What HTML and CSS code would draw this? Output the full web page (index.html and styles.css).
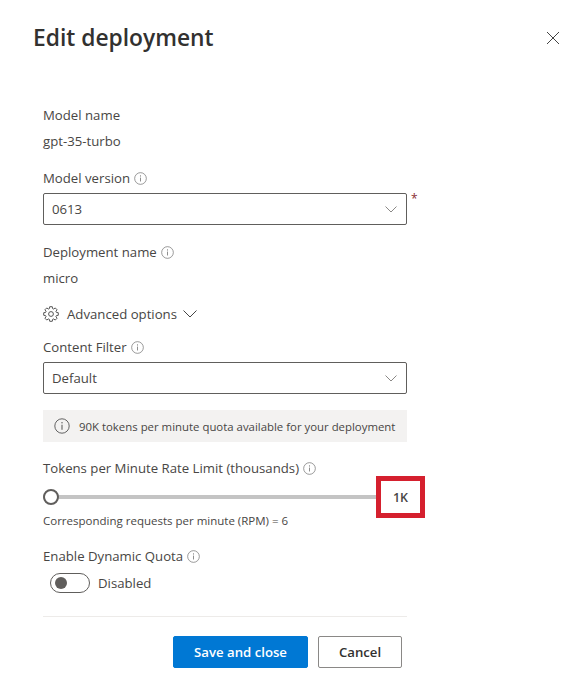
FILE: index.html
```html
<!DOCTYPE html>
<html lang="en">
<head>
<meta charset="utf-8">
<title>Edit deployment</title>
<link rel="stylesheet" href="styles.css">
</head>
<body>
<main class="panel">
  <header class="panel-head">
    <h1 class="panel-title">Edit deployment</h1>
    <button class="close" aria-label="Close">
      <svg width="14" height="14" viewBox="0 0 14 14"><path d="M1 1l12 12M13 1L1 13" fill="none" stroke="#444" stroke-width="1"/></svg>
    </button>
  </header>
  <form class="form">
    <div class="line l-name">Model name</div>
    <div class="line l-value">gpt-35-turbo</div>
    <div class="line l-version">Model version
      <svg class="info" viewBox="0 0 14 14"><use href="#i"/></svg>
    </div>
    <div class="select-row">
      <div class="select"><span>0613</span><svg class="chev" viewBox="0 0 12 7"><path d="M.5.5L6 6 11.500.5" fill="none" stroke="#8a8886"/></svg></div>
      <span class="req">*</span>
    </div>
    <div class="line l-dep">Deployment name
      <svg class="info" viewBox="0 0 14 14"><use href="#i"/></svg>
    </div>
    <div class="line l-value">micro</div>
    <div class="line l-adv">
      <svg class="gear" viewBox="0 0 16 16"><circle cx="8" cy="8" r="2.400" fill="none" stroke="#444" stroke-width=".9"/><path d="M6.710.71L9.290.71 9.640 2.640 10.630 3.060 12.240 1.940 14.060 3.760 12.940 5.370 13.360 6.360 15.290 6.710 15.290 9.290 13.360 9.640 12.940 10.630 14.060 12.240 12.240 14.060 10.630 12.940 9.640 13.360 9.290 15.290 6.710 15.290 6.360 13.360 5.370 12.940 3.760 14.060 1.940 12.240 3.060 10.630 2.640 9.640.71 9.290.71 6.710 2.640 6.360 3.060 5.370 1.940 3.760 3.760 1.940 5.370 3.060 6.360 2.640Z" fill="none" stroke="#444" stroke-width=".9"/></svg>
      <span class="adv-text">Advanced options</span>
      <svg class="adv-chev" viewBox="0 0 14 8"><path d="M.5.500L7 7 13.500.5" fill="none" stroke="#444"/></svg>
    </div>
    <div class="line l-filter">Content Filter
      <svg class="info" viewBox="0 0 14 14"><use href="#i"/></svg>
    </div>
    <div class="select"><span>Default</span><svg class="chev" viewBox="0 0 12 7"><path d="M.5.5L6 6 11.500.5" fill="none" stroke="#8a8886"/></svg></div>
    <div class="notice">
      <svg class="notice-icon" viewBox="0 0 14 14"><use href="#i"/></svg>
      <span>90K tokens per minute quota available for your deployment</span>
    </div>
    <div class="line l-tokens">Tokens per Minute Rate Limit (thousands)
      <svg class="info" viewBox="0 0 14 14"><use href="#i"/></svg>
    </div>
    <div class="slider-row">
      <div class="track"><span class="thumb"></span></div>
      <div class="value-box">1K</div>
    </div>
    <div class="rpm">Corresponding requests per minute (RPM) = 6</div>
    <div class="line l-quota">Enable Dynamic Quota
      <svg class="info" viewBox="0 0 14 14"><use href="#i"/></svg>
    </div>
    <div class="toggle-row">
      <span class="toggle"><span class="knob"></span></span>
      <span>Disabled</span>
    </div>
    <hr class="divider">
    <div class="actions">
      <button type="button" class="btn primary">Save and close</button>
      <button type="button" class="btn">Cancel</button>
    </div>
  </form>
</main>
<svg class="defs" width="0" height="0"><symbol id="i" viewBox="0 0 14 14"><circle cx="7" cy="7" r="6.300" fill="none" stroke="currentColor" stroke-width=".8"/><path d="M7 6v4.200" stroke="currentColor" stroke-width=".9"/><circle cx="7" cy="4.200" r=".6" fill="currentColor"/></symbol></svg>
</body>
</html>
```
FILE: styles.css
```css
* { box-sizing: border-box; }
html, body { margin: 0; padding: 0; background: #fff; }
body {
  width: 575px;
  height: 689px;
  overflow: hidden;
  font-family: "Open Sans", "Noto Sans", sans-serif;
  font-size: 13.200px;
  color: #484644;
}
.panel { padding: 0 15px 0 33px; }
.panel-head {
  height: 76px;
  display: flex;
  align-items: center;
  justify-content: space-between;
}
.panel-title {
  margin: -2px 0 0;
  font-size: 22.800px;
  font-weight: 600;
  letter-spacing: 0;
  color: #323130;
}
.close {
  display: flex;
  padding: 0;
  border: 0;
  background: none;
}
.form { margin: 0 0 0 10px; width: 364px; }
.line {
  display: flex;
  align-items: center;
  gap: 4px;
  height: 20px;
  white-space: nowrap;
}
.l-name { margin-top: 29px; }
.l-value { margin-top: 6px; }
.l-version { margin-top: 17px; margin-bottom: 5px; }
.l-dep { margin-top: 17px; }
.l-adv { margin-top: 16px; gap: 0; }
.l-filter { margin-top: 13px; margin-bottom: 5px; }
.l-tokens { margin-top: 16px; }
.l-quota { margin-top: 17px; }
.info { width: 13px; height: 13px; color: #777; flex: none; }
.select-row { position: relative; }
.req {
  position: absolute;
  left: 368px;
  top: -3px;
  color: #8a2b30;
  font-size: 12px;
}
.select {
  height: 32px;
  border: 1px solid #605e5c;
  border-radius: 2px;
  padding: 0 8px;
  display: flex;
  align-items: center;
  justify-content: space-between;
}
.chev { width: 12px; height: 7px; margin-right: 1px; }
.gear { width: 16px; height: 16px; margin-right: 8px; flex: none; }
.adv-text { margin-right: 6px; }
.adv-chev { width: 14px; height: 8px; }
.notice {
  margin-top: 16px;
  height: 32px;
  background: #f3f2f1;
  display: flex;
  align-items: center;
  padding: 0 11px;
  gap: 9px;
  font-size: 11.400px;
  white-space: nowrap;
}
.notice-icon { width: 16px; height: 16px; color: #555; flex: none; }
.slider-row {
  display: flex;
  align-items: center;
  width: 382px;
  height: 42px;
  margin-top: -2px;
}
.track {
  flex: 1;
  height: 4px;
  background: #c4c4c4;
  position: relative;
}
.thumb {
  position: absolute;
  left: 0;
  top: -6px;
  width: 16px;
  height: 16px;
  background: #fff;
  border: 2px solid #605e5c;
  border-radius: 50%;
}
.value-box {
  flex: none;
  width: 49px;
  height: 42px;
  border: 5px solid #d5202e;
  display: flex;
  align-items: center;
  justify-content: center;
  font-size: 12.500px;
  font-weight: 600;
}
.rpm { font-size: 11.500px; height: 16px; line-height: 16px; margin-top: -5px; white-space: nowrap; }
.toggle-row {
  display: flex;
  align-items: center;
  gap: 8px;
  height: 20px;
  margin: 7px 0 0 7px;
}
.toggle {
  width: 40px;
  height: 20px;
  border: 1px solid #605e5c;
  border-radius: 10px;
  display: flex;
  align-items: center;
  padding-left: 4px;
}
.knob { width: 12px; height: 12px; border-radius: 50%; background: #605e5c; }
.divider { margin: 23px 0 0; border: 0; border-top: 1px solid #edebe9; }
.actions {
  display: flex;
  justify-content: flex-end;
  gap: 10px;
  padding-right: 5px;
  margin-top: 19px;
}
.btn {
  height: 32px;
  width: 84px;
  border: 1px solid #8a8886;
  border-radius: 2px;
  background: #fff;
  color: #323130;
  font: 600 13.200px "Open Sans", "Noto Sans", sans-serif;
  padding: 0;
}
.primary { width: 135px; background: #0078d4; border-color: #0078d4; color: #fff; }
.defs { position: absolute; }
```
